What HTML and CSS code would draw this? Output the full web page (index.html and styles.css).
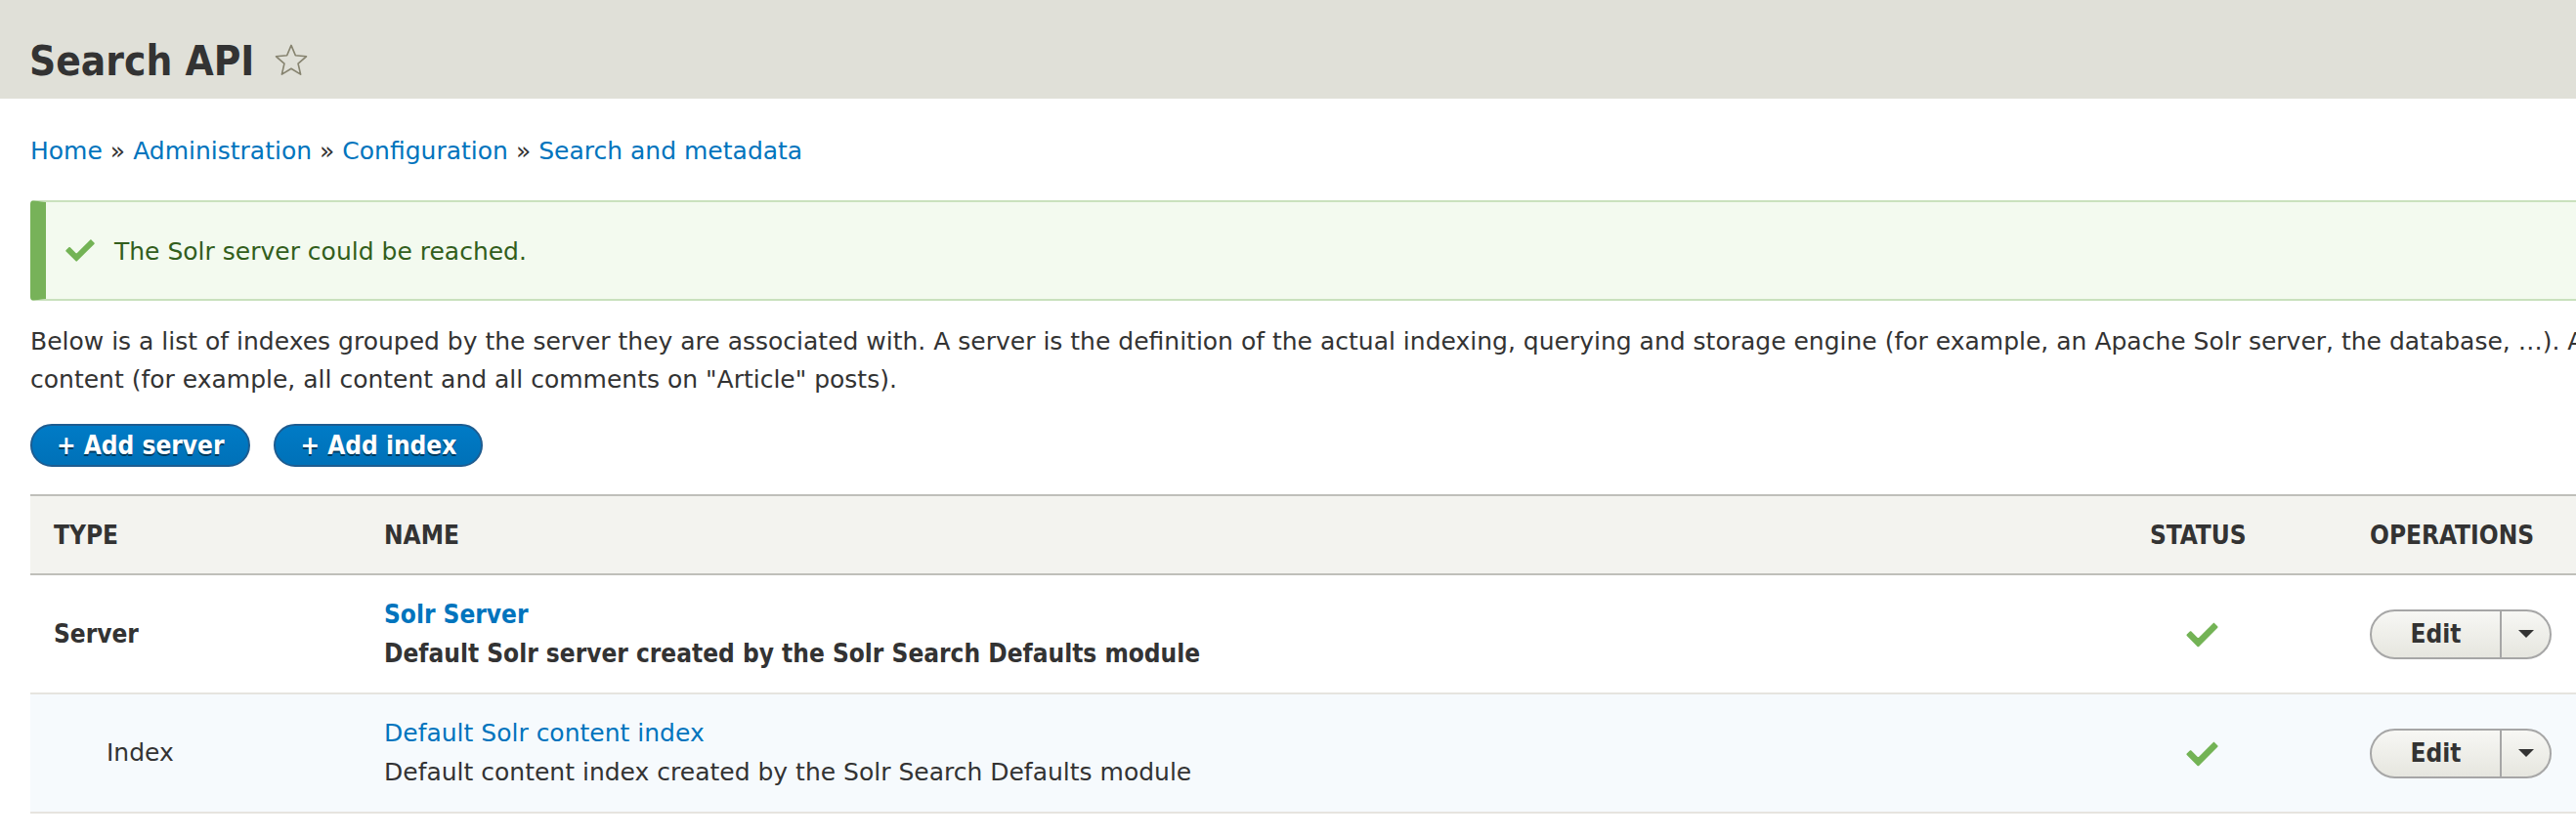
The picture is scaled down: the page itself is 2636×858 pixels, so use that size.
FILE: index.html
```html
<!DOCTYPE html>
<html lang="en">
<head>
<meta charset="utf-8">
<title>Search API</title>
<link rel="stylesheet" href="styles.css">
</head>
<body>
<div class="page">
  <header class="page-header">
    <h1 class="page-title">Search API
      <svg class="star" viewBox="0 0 24 24" width="36" height="36" aria-hidden="true"><polygon points="12,1.6 14.9,8.5 22.3,9.2 16.7,14.1 18.4,21.4 12,17.5 5.6,21.4 7.3,14.1 1.7,9.2 9.1,8.5" fill="none" stroke="#86836f" stroke-width="1.1" stroke-linejoin="round"/></svg>
    </h1>
  </header>
  <main class="content">
    <nav class="breadcrumb">
      <a href="#">Home</a><span class="sep">»</span><a href="#">Administration</a><span class="sep">»</span><a href="#">Configuration</a><span class="sep">»</span><a href="#">Search and metadata</a>
    </nav>
    <div class="messages">
      <svg class="msg-icon" viewBox="0 0 16 16" width="32" height="32" aria-hidden="true"><path fill="#73b355" d="M6.464 13.676c-.194.194-.513.194-.707 0l-4.96-4.955c-.194-.193-.194-.513 0-.707l1.405-1.407c.194-.195.512-.195.707 0l2.849 2.848c.194.193.513.193.707 0l6.629-6.626c.195-.194.514-.194.707 0l1.404 1.404c.193.194.193.513 0 .707l-8.741 8.736z"/></svg>
      <span>The Solr server could be reached.</span>
    </div>
    <p class="description">Below is a list of indexes grouped by the server they are associated with. A server is the definition of the actual indexing, querying and storage engine (for example, an Apache Solr server, the database, …). An index is defines the indexed content (for example, all content and all comments on "Article" posts).</p>
    <ul class="action-links">
      <li><a class="button" href="#">+ Add server</a></li>
      <li><a class="button" href="#">+ Add index</a></li>
    </ul>
    <table class="overview">
      <colgroup>
        <col class="col-type">
        <col class="col-name">
        <col class="col-status">
        <col class="col-ops">
      </colgroup>
      <thead>
        <tr><th>Type</th><th>Name</th><th>Status</th><th>Operations</th></tr>
      </thead>
      <tbody>
        <tr class="server-row">
          <td class="type">Server</td>
          <td class="name"><a href="#">Solr Server</a><div class="desc">Default Solr server created by the Solr Search Defaults module</div></td>
          <td class="status"><svg class="ok" viewBox="0 0 16 16" width="35" height="35" aria-hidden="true"><path fill="#73b355" d="M6.464 13.676c-.194.194-.513.194-.707 0l-4.96-4.955c-.194-.193-.194-.513 0-.707l1.405-1.407c.194-.195.512-.195.707 0l2.849 2.848c.194.193.513.193.707 0l6.629-6.626c.195-.194.514-.194.707 0l1.404 1.404c.193.194.193.513 0 .707l-8.741 8.736z"/></svg></td>
          <td class="ops"><div class="dropbutton"><a href="#" class="dropbutton-action">Edit</a><span class="dropbutton-toggle"><span class="arrow"></span></span></div></td>
        </tr>
        <tr class="index-row">
          <td class="type indent">Index</td>
          <td class="name"><a href="#">Default Solr content index</a><div class="desc">Default content index created by the Solr Search Defaults module</div></td>
          <td class="status"><svg class="ok" viewBox="0 0 16 16" width="35" height="35" aria-hidden="true"><path fill="#73b355" d="M6.464 13.676c-.194.194-.513.194-.707 0l-4.96-4.955c-.194-.193-.194-.513 0-.707l1.405-1.407c.194-.195.512-.195.707 0l2.849 2.848c.194.193.513.193.707 0l6.629-6.626c.195-.194.514-.194.707 0l1.404 1.404c.193.194.193.513 0 .707l-8.741 8.736z"/></svg></td>
          <td class="ops"><div class="dropbutton"><a href="#" class="dropbutton-action">Edit</a><span class="dropbutton-toggle"><span class="arrow"></span></span></div></td>
        </tr>
      </tbody>
    </table>
  </main>
</div>
</body>
</html>
```

FILE: styles.css
```css
html, body {
  margin: 0;
  padding: 0;
  overflow: hidden;
  background: #fff;
}

body {
  font-family: "DejaVu Sans", "Liberation Sans", sans-serif;
  font-size: 25px;
  line-height: 40px;
  color: #333;
}

/* bold text uses the condensed cut, which matches the reference widths */
.page-title,
.button,
.overview th,
.server-row td,
.dropbutton-action {
  font-family: "DejaVu Sans Condensed", "DejaVu Sans", sans-serif;
  font-stretch: condensed;
  font-size: 26px;
  font-weight: bold;
}

a {
  color: #0074bd;
  text-decoration: none;
}

.page {
  width: 3120px;
}

.page-header {
  background: #e0e0d8;
  height: 101px;
  box-sizing: border-box;
  padding: 38px 30px 0;
}

.page-title {
  margin: 0;
  display: flex;
  align-items: center;
  gap: 20px;
  font-size: 42px;
  line-height: 50px;
  color: #333;
}

.star {
  display: block;
  margin-top: -2px;
}

.content {
  padding: 34px 31px 0;
}

.breadcrumb {
  line-height: 40px;
}

.breadcrumb .sep {
  color: #333;
  padding: 0 8px;
}

.messages {
  margin-top: 30px;
  display: flex;
  align-items: center;
  border: 2px solid #c9e1bd;
  border-left: 16px solid #77b259;
  border-radius: 4px;
  background: #f3faef;
  color: #325e1c;
  padding: 31px 20px 28px 19px;
  line-height: 40px;
}

.msg-icon {
  display: block;
  flex: none;
  margin-right: 19px;
  margin-top: -4px;
}

.description {
  margin: 22px 0 0;
  line-height: 39px;
}

.action-links {
  list-style: none;
  margin: 26px 0 0;
  padding: 0;
  display: flex;
  gap: 24px;
}

.button {
  display: flex;
  align-items: center;
  box-sizing: border-box;
  height: 44px;
  padding: 0 25px;
  border: 2px solid #1e5c90;
  border-radius: 22px;
  background: linear-gradient(to bottom, #007bc6, #0071b8);
  color: #fff;
  text-shadow: 0 2px rgba(0, 0, 0, 0.5);
}

.overview {
  margin-top: 28px;
  width: 100%;
  border-collapse: collapse;
  table-layout: fixed;
}

.col-type { width: 338px; }
.col-name { width: 1807px; }
.col-status { width: 225px; }
.col-ops { width: auto; }

.overview thead th {
  background: #f3f3ef;
  border-top: 2px solid #bfbfba;
  border-bottom: 2px solid #bfbfba;
  text-align: left;
  text-transform: uppercase;
  padding: 20px 24px 19px;
  line-height: 40px;
}

.overview td {
  padding: 20px 24px;
  vertical-align: middle;
  border-bottom: 2px solid #e6e4df;
}

.server-row td.name a {
  font-weight: bold;
}

.index-row td {
  background: #f6fafd;
}

.type.indent {
  padding-left: 78px;
}

.overview td.status {
  padding-left: 60px;
}

.ok {
  display: block;
}

.dropbutton {
  display: inline-flex;
  align-items: stretch;
  height: 51px;
  box-sizing: border-box;
  border: 2px solid #a6a6a6;
  border-radius: 26px;
  background: linear-gradient(to bottom, #f7f7f4, #e6e6df);
  overflow: hidden;
  vertical-align: middle;
}

.dropbutton-action {
  display: flex;
  align-items: center;
  justify-content: center;
  width: 131px;
  box-sizing: border-box;
  color: #333;
}

.dropbutton-toggle {
  display: flex;
  align-items: center;
  justify-content: center;
  width: 49px;
  border-left: 2px solid #a6a6a6;
}

.arrow {
  width: 0;
  height: 0;
  border-left: 8px solid transparent;
  border-right: 8px solid transparent;
  border-top: 8px solid #333;
}
```
